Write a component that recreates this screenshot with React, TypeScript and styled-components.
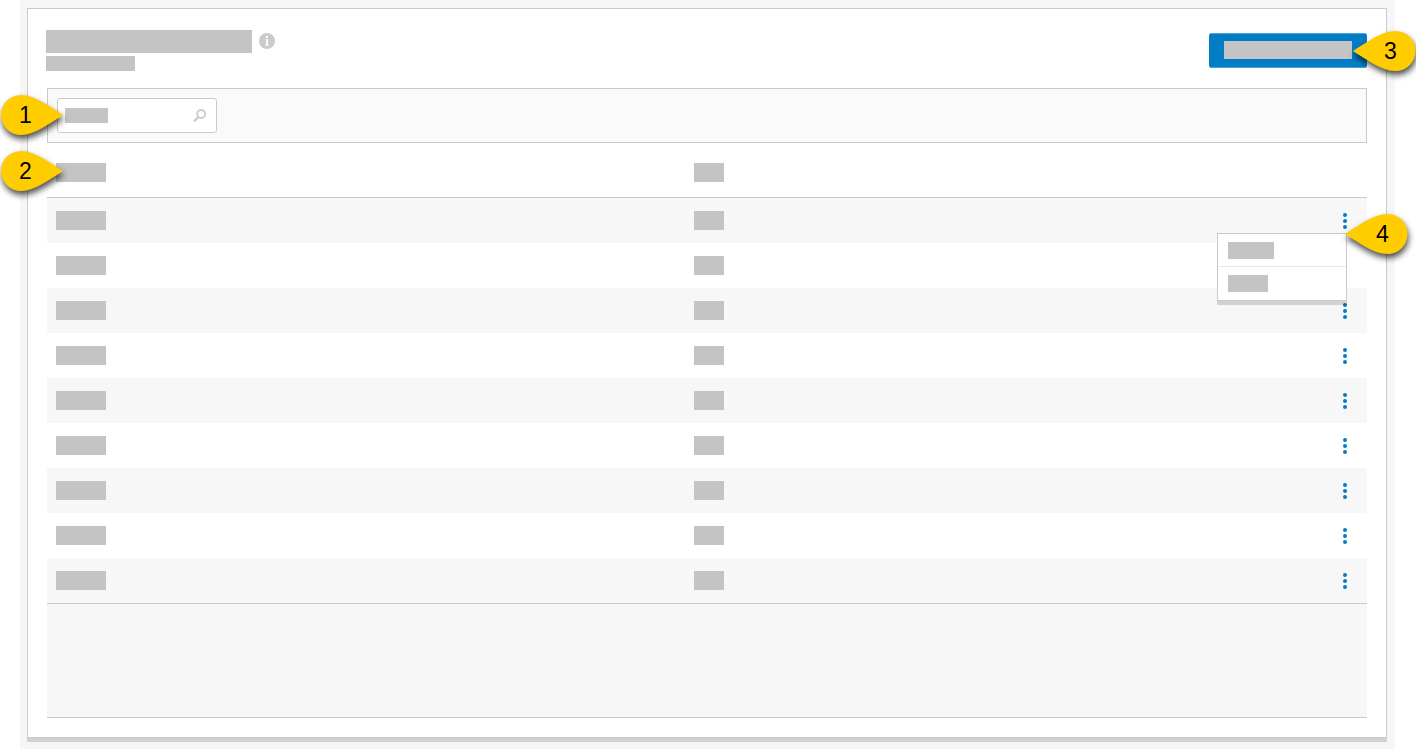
import React from "react";
import styled, { createGlobalStyle } from "styled-components";

const GlobalStyle = createGlobalStyle`
  *, *::before, *::after { box-sizing: border-box; }
  body {
    margin: 0;
    background: #fff;
    font-family: "Liberation Sans", Arial, sans-serif;
  }
`;

const Page = styled.main`
  position: relative;
  overflow: hidden;
  padding: 0 21px 0 20px;
`;

const Backdrop = styled.div`
  padding: 8px 8px 11px 7px;
  background: #f6f6f6;
`;

const Card = styled.section`
  padding: 21px 19px 19px;
  border: 1px solid #cacaca;
  background: #fff;
  box-shadow: 0 4px 0 rgba(0, 0, 0, 0.15);
`;

const Bar = styled.span<{ $w: number; $h: number }>`
  display: block;
  width: ${(p) => p.$w}px;
  height: ${(p) => p.$h}px;
  background: #c4c4c4;
`;

const Header = styled.header`
  display: flex;
  justify-content: space-between;
  align-items: flex-start;
  height: 58px;
  margin-left: -1px;
`;

const Titles = styled.div`
  display: flex;
  flex-direction: column;
  gap: 3px;
`;

const TitleRow = styled.div`
  display: flex;
  gap: 7px;
  align-items: flex-start;
`;

const PlainButton = styled.button`
  display: block;
  padding: 0;
  border: 0;
  background: none;
  cursor: pointer;
`;

const InfoButton = styled(PlainButton)`
  padding-top: 3px;

  svg { display: block; }
`;

const PrimaryButton = styled.button`
  display: flex;
  align-items: flex-start;
  height: 35px;
  margin-top: 3px;
  padding: 8px 15px;
  border: 0;
  border-radius: 3px;
  background: #007dc5;
  box-shadow: inset 0 1px 0 #4ba4d7, inset 0 -1px 0 #4ba4d7;
  cursor: pointer;
`;

const Toolbar = styled.div`
  padding: 9px;
  border: 1px solid #cacaca;
  background: #fafafa;
`;

const SearchBox = styled.label`
  display: flex;
  align-items: center;
  width: 160px;
  height: 35px;
  padding: 0 9px 0 7px;
  border: 1px solid #cacaca;
  border-radius: 3px;
  background: #fff;
`;

const SearchInput = styled.input`
  flex: 1;
  min-width: 0;
  height: 100%;
  padding: 0;
  border: 0;
  outline: 0;
  background: transparent;
`;

const Table = styled.table`
  width: 100%;
  table-layout: fixed;
  border-collapse: separate;
  border-spacing: 0;
`;

const HeadCell = styled.th<{ $w?: number }>`
  width: ${(p) => (p.$w ? `${p.$w}px` : "auto")};
  height: 55px;
  padding: 20px 9px 0;
  border-bottom: 1px solid #cacaca;
  vertical-align: top;
`;

const Row = styled.tr`
  &:nth-child(odd) { background: #f7f7f7; }
`;

const Cell = styled.td`
  height: 45px;
  padding: 0 9px;
`;

const MenuCell = styled.td`
  position: relative;
  padding: 1px 0 0;
`;

const DotsButton = styled(PlainButton)`
  display: flex;
  flex-direction: column;
  gap: 2px;
  margin: 0 auto;
`;

const Dot = styled.span`
  width: 4px;
  height: 4px;
  border-radius: 50%;
  background: #007dc5;
`;

const Menu = styled.div`
  position: absolute;
  z-index: 1;
  top: 35px;
  right: 20px;
  width: 130px;
  padding-bottom: 1px;
  border: 1px solid #cacaca;
  background: #fff;
  box-shadow: 0 4px 0 rgba(0, 0, 0, 0.15);
`;

const MenuItem = styled(PlainButton)`
  width: 100%;
  padding: 8px 10px 7px;

  & + & { border-top: 1px solid #e8e8e8; }
`;

const TableFooter = styled.div`
  height: 115px;
  border-top: 1px solid #cacaca;
  border-bottom: 1px solid #cacaca;
  background: #f7f7f7;
`;

const Pin = styled.div<{ $top: number; $left?: number; $right?: number }>`
  position: absolute;
  z-index: 2;
  top: ${(p) => p.$top}px;
  left: ${(p) => (p.$left === undefined ? "auto" : `${p.$left}px`)};
  right: ${(p) => (p.$right === undefined ? "auto" : `${p.$right}px`)};
  width: 63px;
  height: 40px;

  svg {
    display: block;
    overflow: visible;
    filter: drop-shadow(1px 4px 3px rgba(0, 0, 0, 0.7));
  }
`;

const PinLabel = styled.span<{ $flip: boolean }>`
  position: absolute;
  top: 0;
  left: ${(p) => (p.$flip ? 16 : 4)}px;
  width: 43px;
  font-size: 23px;
  line-height: 40px;
  text-align: center;
  color: #000;
`;

const PIN_RIGHT = "M63 20C50 12 35 0 21 0A20 20 0 0 0 21 40C35 40 50 28 63 20Z";
const PIN_LEFT = "M0 20C13 12 28 0 42.500 0A20 20 0 0 1 42.500 40C28 40 13 28 0 20Z";

type CalloutProps = { n: number; top: number; left?: number; right?: number };

function Callout({ n, top, left, right }: CalloutProps) {
  const flip = right !== undefined;
  return (
    <Pin $top={top} $left={left} $right={right}>
      <svg width="63" height="40" viewBox="0 0 63 40" aria-hidden="true">
        <path d={flip ? PIN_LEFT : PIN_RIGHT} fill="#fc0" />
      </svg>
      <PinLabel $flip={flip}>{n}</PinLabel>
    </Pin>
  );
}

const rows = [1, 2, 3, 4, 5, 6, 7, 8, 9];

export default function App() {
  return (
    <>
      <GlobalStyle />
      <Page>
        <Backdrop>
          <Card>
            <Header>
              <Titles>
                <TitleRow>
                  <Bar $w={206} $h={23} />
                  <InfoButton aria-label="Information">
                    <svg width="16" height="16" viewBox="0 0 16 16">
                      <circle cx="8" cy="8" r="8" fill="#cbcbcb" />
                      <path d="M7 3h2v2H7zM6.500 6.300H9V12h.8v.8H6.300V12H7.200V7.100H6.500z" fill="#fff" />
                    </svg>
                  </InfoButton>
                </TitleRow>
                <Bar $w={89} $h={15} />
              </Titles>
              <PrimaryButton aria-label="Create">
                <Bar $w={128} $h={18} />
              </PrimaryButton>
            </Header>
            <Toolbar>
              <SearchBox>
                <Bar $w={43} $h={15} />
                <SearchInput type="text" aria-label="Search" />
                <svg width="14" height="14" viewBox="0 0 14 14" fill="none" stroke="#cacaca">
                  <circle cx="8.200" cy="5" r="4" strokeWidth="1.800" />
                  <path d="M5.300 8L1 12.400" strokeWidth="2.200" />
                </svg>
              </SearchBox>
            </Toolbar>
            <Table>
              <thead>
                <tr>
                  <HeadCell><Bar $w={50} $h={19} /></HeadCell>
                  <HeadCell><Bar $w={30} $h={19} /></HeadCell>
                  <HeadCell $w={44} />
                </tr>
              </thead>
              <tbody>
                {rows.map((row) => (
                  <Row key={row}>
                    <Cell><Bar $w={50} $h={19} /></Cell>
                    <Cell><Bar $w={30} $h={19} /></Cell>
                    <MenuCell>
                      {row !== 2 && (
                        <DotsButton aria-label="Row actions">
                          <Dot /><Dot /><Dot />
                        </DotsButton>
                      )}
                      {row === 1 && (
                        <Menu>
                          <MenuItem aria-label="First action"><Bar $w={46} $h={17} /></MenuItem>
                          <MenuItem aria-label="Second action"><Bar $w={40} $h={17} /></MenuItem>
                        </Menu>
                      )}
                    </MenuCell>
                  </Row>
                ))}
              </tbody>
            </Table>
            <TableFooter />
          </Card>
        </Backdrop>
        <Callout n={1} top={95} left={0} />
        <Callout n={2} top={151} left={0} />
        <Callout n={3} top={31} right={0} />
        <Callout n={4} top={214} right={8} />
      </Page>
    </>
  );
}
